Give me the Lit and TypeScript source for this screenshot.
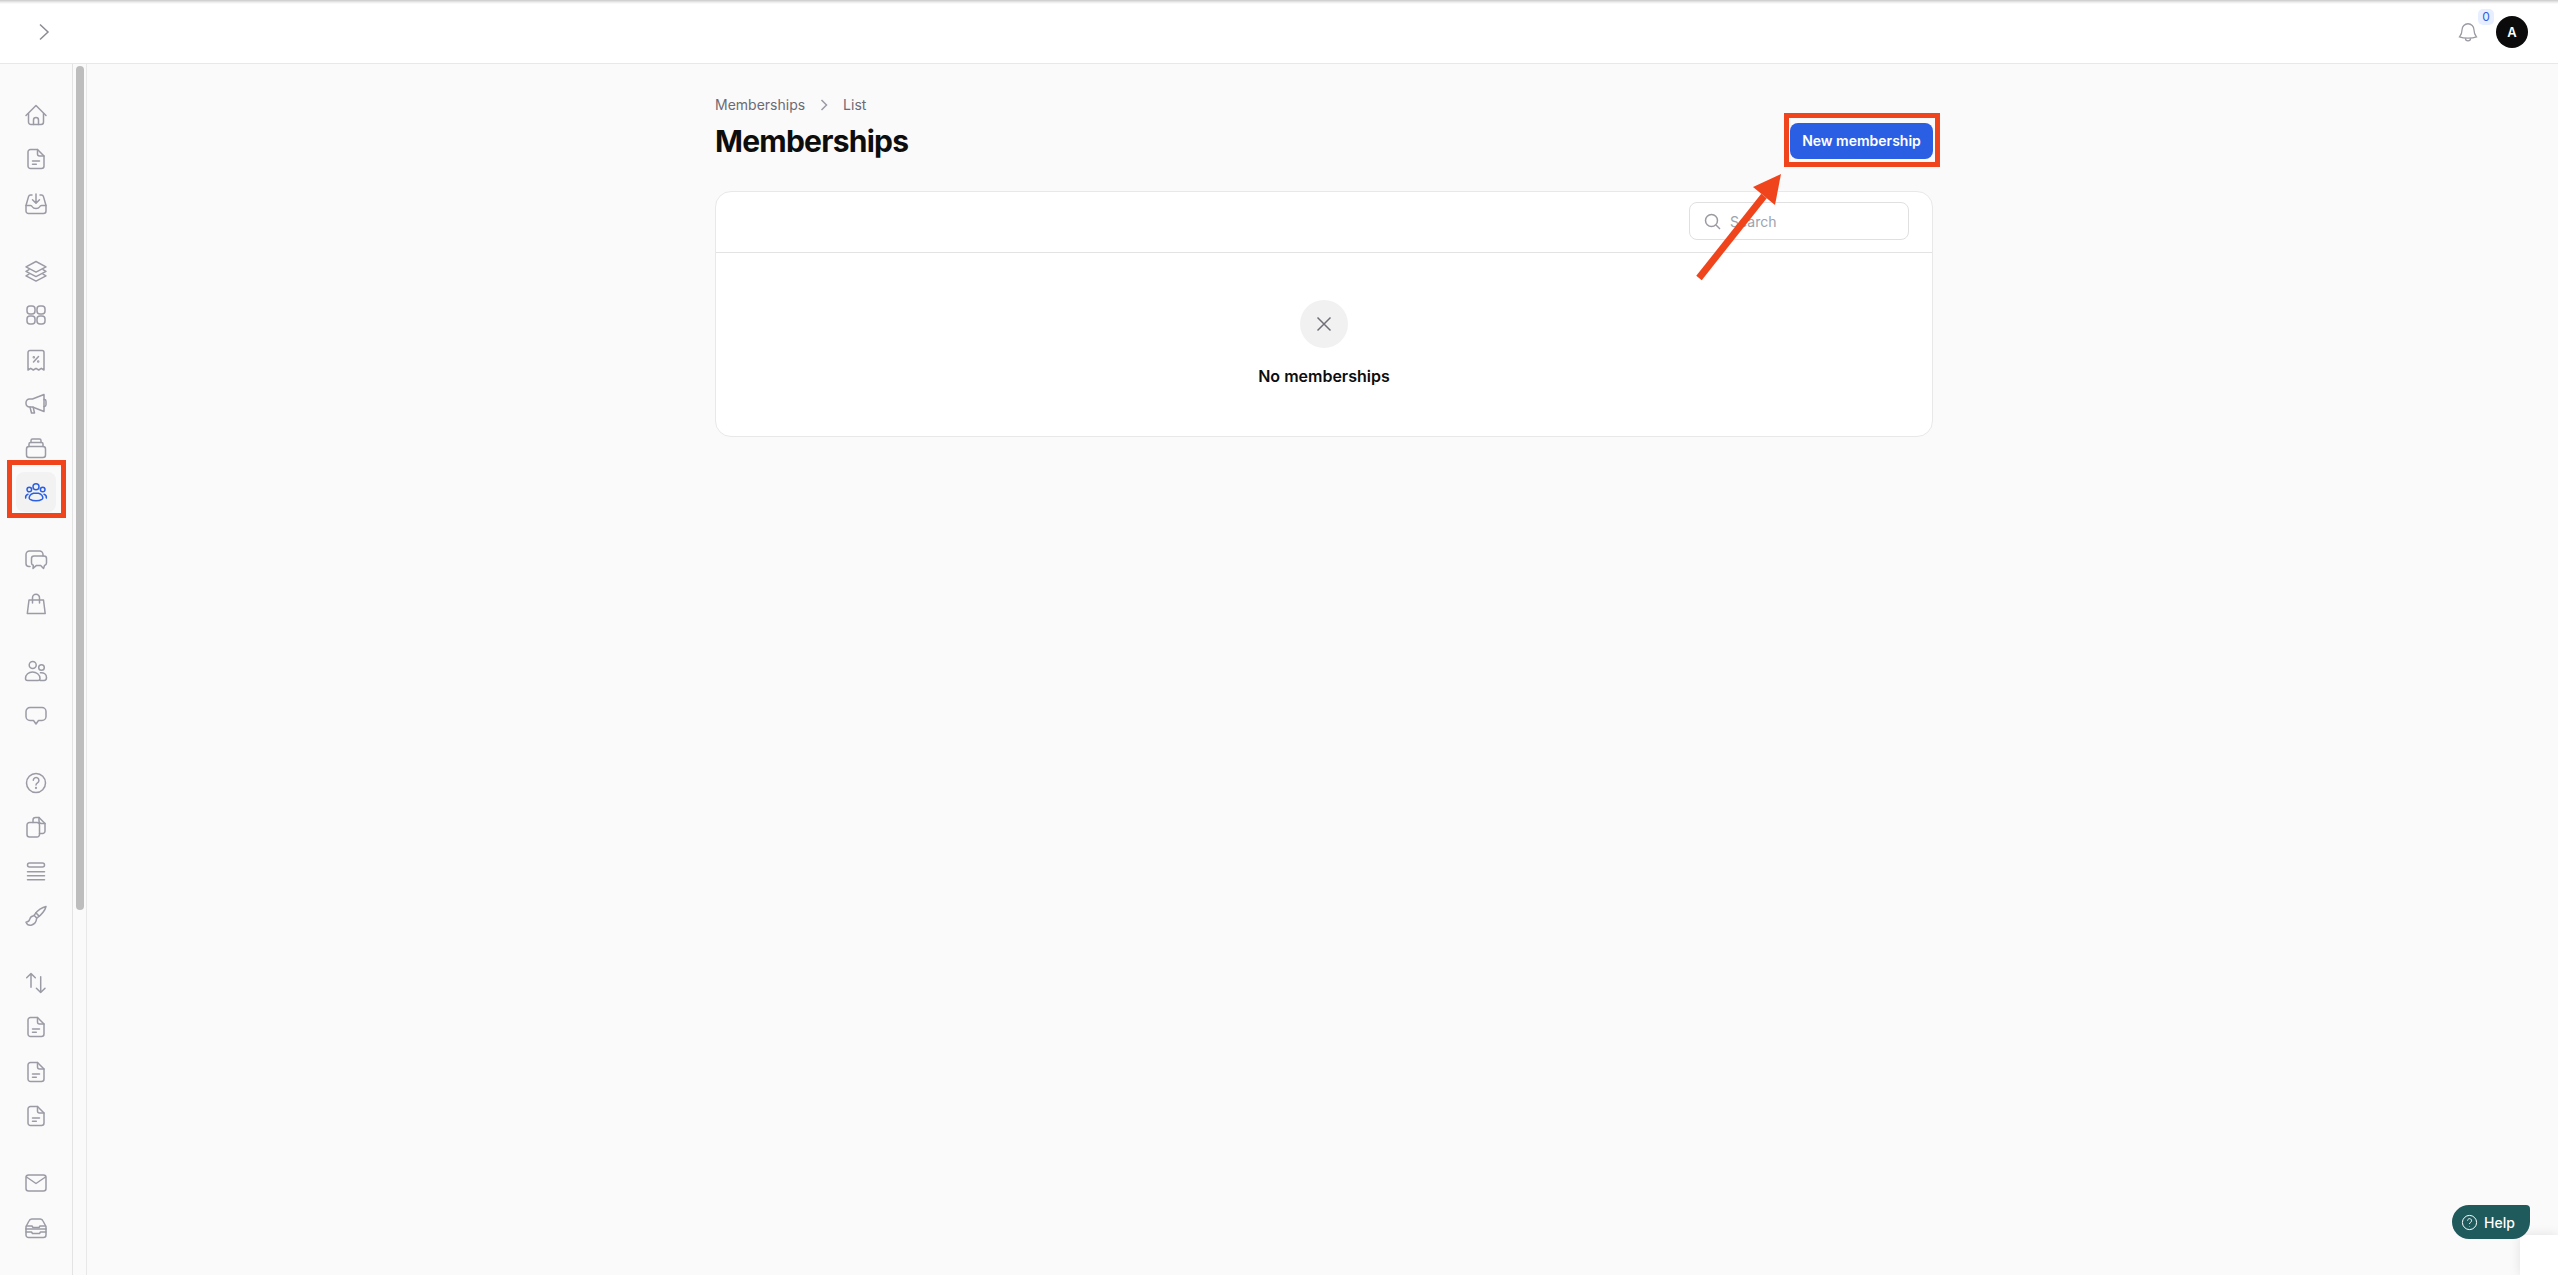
import { LitElement, html, css, svg } from "lit";
import { customElement } from "lit/decorators.js";

const doc = svg`<path d="M13.500 2.500H6.500A2.500 2.500 0 0 0 4 5v14a2.500 2.500 0 0 0 2.500 2.500h11A2.500 2.500 0 0 0 20 19V9l-6.500-6.500Z"/><path d="M13.500 2.500V7a2 2 0 0 0 2 2H20"/><path d="M8.500 14h7M8.500 17.300h3.800"/>`;

const icons: Record<string, unknown> = {
  home: svg`<path d="M2 12.500 12 2.500l10 10"/><path d="M4.500 10.500v8.500a2.500 2.500 0 0 0 2.500 2.500h10a2.500 2.500 0 0 0 2.500-2.500v-8.500"/><path d="M9.500 21.500v-4.500a2.500 2.500 0 0 1 5 0v4.500"/>`,
  doc,
  inbox: svg`<path d="M8 3H6.500a2 2 0 0 0-1.900 1.400L2 13.500v5.500a2.500 2.500 0 0 0 2.500 2.500h15A2.500 2.500 0 0 0 22 19v-5.500l-2.600-9.100A2 2 0 0 0 17.500 3H16"/><path d="M2 13.500h4.500c1 0 1.500.6 2 1.500s1.500 1.500 3.500 1.500 3-.6 3.500-1.500 1-1.500 2-1.500H22"/><path d="M12 2v9M8.500 7.800l3.500 3.500 3.500-3.500"/>`,
  layers: svg`<path d="m12 2.500 10 5.300-10 5.300L2 7.800l10-5.300Z"/><path d="m5 10.700-3 1.600 10 5.300 10-5.300-3-1.600"/><path d="m5 15.200-3 1.600 10 5.300 10-5.300-3-1.600"/>`,
  grid: svg`<rect x="3" y="3" width="8" height="8" rx="3"/><rect x="13" y="3" width="8" height="8" rx="3"/><rect x="3" y="13" width="8" height="8" rx="3"/><rect x="13" y="13" width="8" height="8" rx="3"/>`,
  receipt: svg`<path d="M6 2.500h12a2 2 0 0 1 2 2v17.500l-2.700-1.700-2.600 1.700-2.700-1.700-2.700 1.700-2.600-1.700L4 22V4.500a2 2 0 0 1 2-2Z"/><path d="m9.500 14 5-5.500"/><circle cx="9.800" cy="9.300" r=".5"/><circle cx="14.200" cy="13.500" r=".5"/>`,
  mega: svg`<path d="M20 2.500 8.500 7H5.500a3.500 3.500 0 0 0-3.500 3.500v1A3.500 3.500 0 0 0 5.500 15h3L20 19.500V2.500Z"/><path d="M20 7.500h.3a1.700 1.700 0 0 1 1.700 1.700v3.600a1.700 1.700 0 0 1-1.700 1.700H20"/><path d="m6 15 1.500 6h3l-1.300-5.700"/>`,
  stack: svg`<rect x="2.500" y="10.500" width="19" height="11" rx="2.500"/><path d="M5 10.500V8a1.500 1.500 0 0 1 1.500-1.500h11A1.500 1.500 0 0 1 19 8v2.500"/><path d="M7 6.500V4.500A1.500 1.500 0 0 1 8.500 3h7A1.500 1.500 0 0 1 17 4.500v2"/>`,
  members: svg`<circle cx="12" cy="5.800" r="3"/><circle cx="5.300" cy="8.500" r="2.300"/><circle cx="18.700" cy="8.500" r="2.300"/><path d="M12 12c-3.600 0-6.200 1.900-6.800 4.300-.2.900.2 1.500.9 2 1.500 1 3.500 1.500 5.900 1.500s4.400-.5 5.900-1.500c.7-.5 1.100-1.100.9-2-.6-2.400-3.200-4.300-6.800-4.300Z"/><path d="M1.700 17c-.3-1.700.5-3.200 2.300-3.800M22.300 17c.3-1.700-.5-3.200-2.300-3.800"/>`,
  chat: svg`<path d="M6 18.500H5A3 3 0 0 1 2 15.500V6.500a3.500 3.500 0 0 1 3.500-3.500h10A3.500 3.500 0 0 1 19 6.500V8"/><path d="M10 8h10a2.500 2.500 0 0 1 2.500 2.500v4.500a2.500 2.500 0 0 1-2 2.400l-1 3-2.800-3h-4.200l-3.500 3 .3-3.100A2.500 2.500 0 0 1 7.500 15v-4.500A2.500 2.500 0 0 1 10 8Z"/>`,
  bag: svg`<path d="M5 8h14.500l1.700 13.500H3.300L5 8Z"/><path d="M8.500 11V5.800a3.500 3.500 0 0 1 7 0V11"/>`,
  users: svg`<circle cx="8.700" cy="6" r="3.500"/><circle cx="17.500" cy="8.500" r="2.800"/><path d="M1.500 19.500c0-4 3.200-6.500 7-6.500s7.500 2.500 7.500 6.500c0 1.200-.8 2-2 2H3.500c-1.200 0-2-.8-2-2Z"/><path d="M16.500 13.800c3.400-.5 6 1.500 6 4.700 0 1.800-1 3-2.500 3h-4"/>`,
  comment: svg`<path d="M6 3.500h12A4 4 0 0 1 22 7.500v5a4 4 0 0 1-4 4h-3.500L12 20l-2.500-3.500H6a4 4 0 0 1-4-4v-5a4 4 0 0 1 4-4Z"/>`,
  help: svg`<circle cx="12" cy="12" r="9.500"/><path d="M9.300 9.300a2.800 2.800 0 1 1 4.200 2.500c-1 .6-1.500 1.100-1.500 2.200"/><circle cx="12" cy="17" r=".4"/>`,
  copy: svg`<path d="M9 7.500V5A2.500 2.500 0 0 1 11.500 2.500H15l6 6v7.500a2.500 2.500 0 0 1-2.500 2.500H15.500"/><path d="M15 2.500V6a2.500 2.500 0 0 0 2.500 2.500H21"/><path d="M5.500 7.500H13a2.500 2.500 0 0 1 2.500 2.500v9.500A2.500 2.500 0 0 1 13 22H5.500A2.500 2.500 0 0 1 3 19.500V10a2.500 2.500 0 0 1 2.500-2.500Z"/>`,
  rows: svg`<rect x="3.500" y="3" width="17" height="4" rx="2"/><path d="M3.500 11.800h17M3.500 15.800h17M3.500 19.800h17"/>`,
  brush: svg`<path d="M22 2.500c-3 .6-9 3.700-12 8.800l2.800 2.800C17.800 10.800 21.400 5.500 22 2.500Z"/><path d="m11.800 8.800 3.300 3.300"/><path d="M9.700 11.700c-2.200.3-3.500 1.500-3.900 3.500-.3 1.500-1.200 2.600-3.800 3 1.200 2.800 3.500 3.500 5.800 2.800 2.600-.8 4.400-2.600 4.800-6.300"/>`,
  arrows: svg`<path d="M7 16.300V2.500M2.700 6.800 7 2.500l4.300 4.300"/><path d="M16.700 5.800v15.700M12.400 17.200l4.300 4.300 4.300-4.300"/>`,
  mail: svg`<rect x="2" y="4" width="20" height="16" rx="2.500"/><path d="m2.500 6 9.500 6.500L21.500 6"/>`,
  tray: svg`<path d="M2 13v6a2.500 2.500 0 0 0 2.500 2.500h15A2.500 2.500 0 0 0 22 19v-6"/><path d="M2 13v-2.500l3-5.500A3 3 0 0 1 7.700 3h8.600A3 3 0 0 1 19 5l3 5.500V13"/><path d="M2.200 13h19.600"/><path d="M2.500 10h5.500l1 1.500h6l1-1.500h5.500"/><path d="M2 16h5.500l1 1.500h7l1-1.500H22"/>`,
};

const groups: string[][] = [
  ["home", "doc", "inbox"],
  ["layers", "grid", "receipt", "mega", "stack", "members"],
  ["chat", "bag"],
  ["users", "comment"],
  ["help", "copy", "rows", "brush"],
  ["arrows", "doc", "doc", "doc"],
  ["mail", "tray"],
];

@customElement("app-root")
export class AppRoot extends LitElement {
  static styles = css`
    :host {
      display: block;
      height: 100vh;
      min-height: 1275px;
      overflow: hidden;
      position: relative;
      font-family: Inter, "Liberation Sans", sans-serif;
      background: #fafafa;
      color: #0d0d0e;
    }
    .shell { display: flex; flex-direction: column; height: 1275px; }
    .top {
      height: 64px;
      flex: none;
      box-sizing: border-box;
      background: linear-gradient(#c9c9c9 0, #e9e9e9 2px, #ffffff 4px);
      border-bottom: 1px solid #e8e8e8;
      display: flex;
      align-items: center;
      justify-content: space-between;
      padding: 0 30px 0 36px;
    }
    .chev { width: 16px; height: 18px; fill: none; stroke: #8b8b93; stroke-width: 1.5; }
    .top-right { display: flex; align-items: center; gap: 17px; }
    .bell-wrap { position: relative; width: 22px; height: 22px; margin-top: 1px; }
    .bell { width: 22px; height: 22px; fill: none; stroke: #9a9aa2; stroke-width: 1.4; display: block; }
    .badge {
      position: absolute;
      left: 21px;
      top: -12px;
      width: 16px;
      height: 16px;
      border-radius: 5px;
      background: #e6eeff;
      color: #2b5fe3;
      font-size: 12px;
      line-height: 16px;
      text-align: center;
    }
    .avatar {
      width: 32px;
      height: 32px;
      border-radius: 50%;
      background: #0b0b0b;
      color: #fff;
      font-size: 13px;
      font-weight: 600;
      display: flex;
      align-items: center;
      justify-content: center;
    }
    .body { flex: 1; display: flex; min-height: 0; }
    .side {
      width: 73px;
      flex: none;
      box-sizing: border-box;
      border-right: 1px solid #e3e3e3;
      padding-top: 29px;
      display: flex;
      flex-direction: column;
      gap: 23px;
    }
    .group { display: flex; flex-direction: column; }
    .item {
      height: 44.3px;
      display: flex;
      align-items: center;
      justify-content: center;
      position: relative;
    }
    .item svg {
      width: 24px;
      height: 24px;
      fill: none;
      stroke: #9b9ba6;
      stroke-width: 1.5;
      stroke-linecap: round;
      stroke-linejoin: round;
      position: relative;
    }
    .item.active svg { stroke: #2b5fe3; }
    .item.active::before {
      content: "";
      position: absolute;
      left: 16px;
      top: 2px;
      width: 40px;
      height: 40px;
      border-radius: 8px;
      background: #f2f2f2;
    }
    .item.active::after {
      content: "";
      position: absolute;
      left: 7px;
      top: -10px;
      width: 59px;
      height: 58px;
      box-sizing: border-box;
      border: 5px solid #f0441c;
    }
    .track {
      width: 14px;
      flex: none;
      box-sizing: border-box;
      border-right: 1px solid #e8e8e8;
      padding: 2px 2px 0 3px;
    }
    .thumb { height: 844px; border-radius: 4px; background: #bdbdbd; }
    .main {
      flex: 1;
      min-width: 0;
      padding: 31px 0 0 3px;
      display: flex;
      justify-content: center;
      box-sizing: border-box;
    }
    .content { width: 1218px; position: relative; }
    .crumbs {
      display: flex;
      align-items: center;
      font-size: 14px;
      line-height: 20px;
      color: #6b6b74;
      gap: 13px;
    }
    .crumbs svg { width: 12px; height: 12px; fill: none; stroke: #9b9ba6; stroke-width: 1.5; }
    .head {
      display: flex;
      justify-content: space-between;
      align-items: center;
      margin-top: 8px;
      height: 36px;
    }
    h1 {
      margin: 0;
      font-size: 30px;
      line-height: 36px;
      font-weight: 700;
      letter-spacing: -0.75px;
    }
    .btn-wrap { position: relative; }
    .btn {
      display: block;
      width: 143px;
      height: 36px;
      box-sizing: border-box;
      border: 0;
      border-radius: 8px;
      background: #2b5fe3;
      color: #fff;
      font: 600 14px/36px Inter, "Liberation Sans", sans-serif;
      padding: 0;
      text-align: center;
    }
    .btn-mark {
      position: absolute;
      left: -6px;
      right: -7px;
      top: -10px;
      bottom: -8px;
      border: 5px solid #f0441c;
      pointer-events: none;
    }
    .card {
      margin-top: 32px;
      height: 246px;
      box-sizing: border-box;
      background: #fff;
      border: 1px solid #e8e8e8;
      border-radius: 16px;
      display: flex;
      flex-direction: column;
    }
    .card-head {
      height: 61px;
      flex: none;
      box-sizing: border-box;
      border-bottom: 1px solid #e3e3e3;
      padding: 10px 23px 0 0;
      display: flex;
      justify-content: flex-end;
    }
    .search {
      width: 220px;
      height: 38px;
      box-sizing: border-box;
      border: 1px solid #e0e0e0;
      border-radius: 8px;
      display: flex;
      align-items: center;
      gap: 9px;
      padding-left: 14px;
      color: #9ca3af;
      font-size: 14px;
    }
    .search svg { width: 17px; height: 17px; fill: none; stroke: #9a9aa2; stroke-width: 1.5; flex: none; }
    .empty {
      flex: 1;
      display: flex;
      flex-direction: column;
      align-items: center;
      padding-top: 47px;
      gap: 16px;
    }
    .circle {
      width: 48px;
      height: 48px;
      border-radius: 50%;
      background: #f1f1f1;
      display: flex;
      align-items: center;
      justify-content: center;
    }
    .circle svg { width: 24px; height: 24px; fill: none; stroke: #6f6f78; stroke-width: 1.5; }
    .empty-text { font-size: 16px; line-height: 24px; font-weight: 600; }
    .arrow {
      position: absolute;
      left: 970px;
      top: 70px;
      width: 110px;
      height: 130px;
      pointer-events: none;
    }
    .help {
      position: absolute;
      left: 2452px;
      top: 1205px;
      width: 78px;
      height: 34px;
      box-sizing: border-box;
      border-radius: 17px 4px 17px 17px;
      background: #1f5a5c;
      color: #fff;
      font-size: 14px;
      font-weight: 500;
      display: flex;
      align-items: center;
      gap: 6px;
      padding-left: 9px;
    }
    .help svg { width: 17px; height: 17px; fill: none; stroke: #fff; stroke-width: 1.4; flex: none; }
    .corner {
      position: absolute;
      left: 2520px;
      top: 1235px;
      width: 38px;
      height: 40px;
      background: #fff;
      box-shadow: 0 0 12px rgba(0, 0, 0, 0.1);
    }
  `;

  render() {
    return html`
      <div class="shell">
        <header class="top">
          <svg class="chev" viewBox="0 0 16 18"><path d="M4 1.500 12 9l-8 7.500" /></svg>
          <div class="top-right">
            <div class="bell-wrap">
              <svg class="bell" viewBox="0 0 24 24">
                <path d="M12 3a6.500 6.500 0 0 0-6.500 6.500c0 4.500-1.300 6-2.800 7.800 2.500 1 5.800 1.400 9.300 1.400s6.800-.4 9.300-1.400c-1.500-1.800-2.800-3.300-2.800-7.800A6.500 6.500 0 0 0 12 3Z" />
                <path d="M9.200 18.800a2.800 2.800 0 0 0 5.600 0" />
              </svg>
              <span class="badge">0</span>
            </div>
            <div class="avatar">A</div>
          </div>
        </header>
        <div class="body">
          <nav class="side">
            ${groups.map(
              (g) => html`<div class="group">
                ${g.map(
                  (n) => html`<div class="item ${n === "members" ? "active" : ""}">
                    <svg viewBox="0 0 24 24">${icons[n]}</svg>
                  </div>`
                )}
              </div>`
            )}
          </nav>
          <div class="track"><div class="thumb"></div></div>
          <main class="main">
            <div class="content">
              <div class="crumbs">
                <span>Memberships</span>
                <svg viewBox="0 0 12 12"><path d="M3.500 1 8.500 6l-5 5" /></svg>
                <span>List</span>
              </div>
              <div class="head">
                <h1>Memberships</h1>
                <div class="btn-wrap">
                  <button class="btn">New membership</button>
                  <div class="btn-mark"></div>
                </div>
              </div>
              <section class="card">
                <div class="card-head">
                  <div class="search">
                    <svg viewBox="0 0 17 17"><circle cx="7.500" cy="7.500" r="6" /><path d="m12 12 4 4" /></svg>
                    <span>Search</span>
                  </div>
                </div>
                <div class="empty">
                  <div class="circle">
                    <svg viewBox="0 0 24 24"><path d="m5.500 5.500 13 13M18.500 5.500l-13 13" /></svg>
                  </div>
                  <div class="empty-text">No memberships</div>
                </div>
              </section>
              <svg class="arrow" viewBox="0 0 110 130">
                <path d="M14 113 79 31" stroke="#f0441c" stroke-width="7" fill="none" />
                <path d="M96 9 68 22 90 40Z" fill="#f0441c" />
              </svg>
            </div>
          </main>
        </div>
      </div>
      <div class="corner"></div>
      <div class="help">
        <svg viewBox="0 0 24 24">
          <circle cx="12" cy="12" r="10" />
          <path d="M9.300 9.300a2.800 2.800 0 1 1 4.200 2.500c-1 .6-1.500 1.100-1.500 2.200M12 17v.5" />
        </svg>
        <span>Help</span>
      </div>
    `;
  }
}
